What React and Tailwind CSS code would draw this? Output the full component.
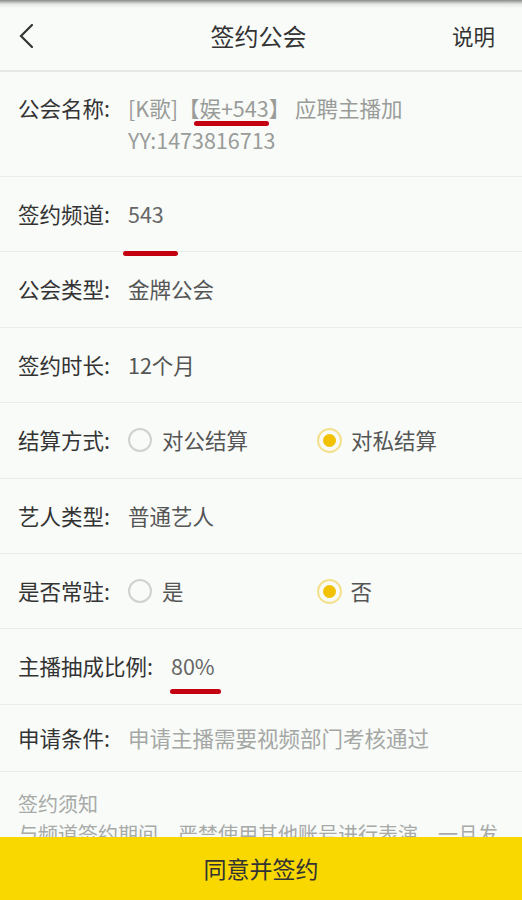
import React from "react";

const font = { fontFamily: '"Noto Sans CJK SC", "Noto Sans", sans-serif' };

function Radio({ checked }) {
  if (checked) {
    return (
      <span className="flex h-[25px] w-[25px] items-center justify-center rounded-full border-2 border-[#f4e08a]">
        <span className="h-[13px] w-[13px] rounded-full bg-[#f2c100]" />
      </span>
    );
  }
  return <span className="h-[24px] w-[24px] rounded-full border-2 border-[#cfd2cf]" />;
}

function Row({ label, children, className = "h-[75.4px]" }) {
  return (
    <div className={`flex items-center border-b border-[#e9ece9] pl-[18px] pr-[20px] ${className}`}>
      <span className="shrink-0 text-[21.5px] text-[#333]">{label}</span>
      {children}
    </div>
  );
}

function Underlined({ children, lineClass }) {
  return (
    <span className="relative">
      {children}
      <span className={`absolute h-[5px] rounded-full bg-[#c40010] ${lineClass}`} />
    </span>
  );
}

export default function App() {
  return (
    <div className="flex h-[900px] w-[522px] flex-col overflow-hidden bg-[#f8fbf8]" style={font}>
      <div className="h-[8px] bg-gradient-to-b from-[#8a8c8a] via-[#e4e6e4] to-[#f8fbf8]" />
      <div className="grid h-[64px] grid-cols-[1fr_auto_1fr] items-center border-b-2 border-[#e6e9e6] pl-[18px] pr-[27px]">
        <svg width="18" height="26" viewBox="0 0 18 26" className="mt-[-6px]">
          <path d="M14 2 L3 13 L14 24" fill="none" stroke="#333" strokeWidth="2.2" strokeLinecap="round" />
        </svg>
        <span className="mt-[-6px] pl-[4px] text-[24px] text-[#333]">签约公会</span>
        <span className="mt-[-6px] justify-self-end text-[21.5px] text-[#333]">说明</span>
      </div>

      <div className="flex-1 overflow-hidden">
        <div className="flex border-b border-[#e9ece9] pb-[20px] pl-[18px] pr-[20px] pt-[20px] leading-[32px]">
          <span className="shrink-0 text-[21.5px] text-[#333]">公会名称:</span>
          <div className="ml-[18px] text-[21.5px] text-[#9a9c9a]">
            <div>
              [K歌]【<Underlined lineClass="left-[-5px] right-[0px] bottom-[-3px]">娱+543</Underlined>】 应聘主播加
            </div>
            <div>YY:1473816713</div>
          </div>
        </div>

        <Row label="签约频道:">
          <span className="ml-[18px] text-[21.5px] text-[#666]">
            <Underlined lineClass="left-[-5px] right-[-14px] bottom-[-27px]">543</Underlined>
          </span>
        </Row>
        <Row label="公会类型:">
          <span className="ml-[18px] text-[21.5px] text-[#555]">金牌公会</span>
        </Row>
        <Row label="签约时长:">
          <span className="ml-[18px] text-[21.5px] text-[#555]">12个月</span>
        </Row>
        <Row label="结算方式:">
          <div className="ml-[18px] flex items-center">
            <Radio />
            <span className="ml-[10px] text-[21.5px] text-[#555]">对公结算</span>
          </div>
          <div className="ml-[69px] flex items-center">
            <Radio checked />
            <span className="ml-[9px] text-[21.5px] text-[#555]">对私结算</span>
          </div>
        </Row>
        <Row label="艺人类型:">
          <span className="ml-[18px] text-[21.5px] text-[#555]">普通艺人</span>
        </Row>
        <Row label="是否常驻:">
          <div className="ml-[18px] flex items-center">
            <Radio />
            <span className="ml-[10px] text-[21.5px] text-[#555]">是</span>
          </div>
          <div className="ml-[133px] flex items-center">
            <Radio checked />
            <span className="ml-[9px] text-[21.5px] text-[#555]">否</span>
          </div>
        </Row>
        <Row label="主播抽成比例:">
          <span className="ml-[18px] text-[21.5px] text-[#666]">
            <Underlined lineClass="left-[-1px] right-[-6px] bottom-[-13px]">80%</Underlined>
          </span>
        </Row>
        <Row label="申请条件:" className="h-[67px]">
          <span className="ml-[18px] text-[21.5px] text-[#a5a7a5]">申请主播需要视频部门考核通过</span>
        </Row>
        <div className="pl-[18px] pr-[20px] pt-[17px] text-[20px] leading-[30px] text-[#a8aaa8]">
          <div>签约须知</div>
          <div>与频道签约期间，严禁使用其他账号进行表演，一旦发现将按违约处理。</div>
        </div>
      </div>

      <div className="flex h-[63px] shrink-0 items-center justify-center bg-[#f9d800] text-[23px] text-[#333]">
        同意并签约
      </div>
    </div>
  );
}
